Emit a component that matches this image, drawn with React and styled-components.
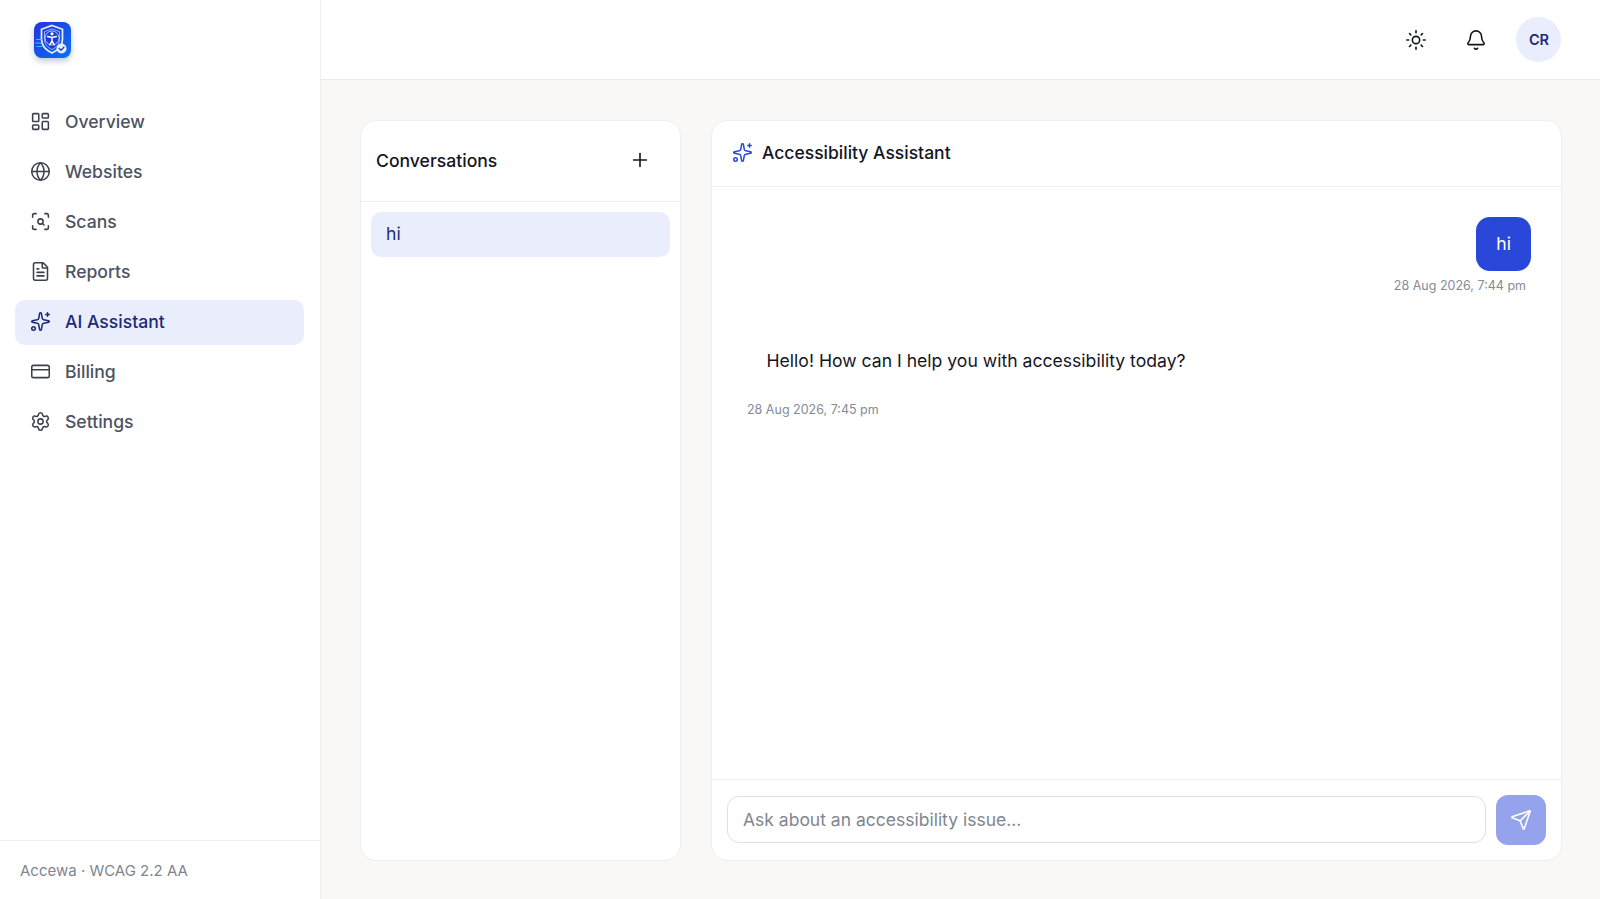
import React from 'react'
import styled, { createGlobalStyle } from 'styled-components'
import {
  LayoutDashboard,
  Globe,
  ScanSearch,
  FileText,
  Sparkles,
  CreditCard,
  Settings,
  Sun,
  Bell,
  Plus,
  Send,
} from 'lucide-react'

const GlobalStyle = createGlobalStyle`
  * { box-sizing: border-box; }
  html, body { margin: 0; height: 100%; }
  body {
    font-family: Inter, "Noto Sans", sans-serif;
    background: #f9f8f6;
    color: #14161f;
  }
  #root { height: 100%; }
`

const Shell = styled.div`
  display: grid;
  grid-template-columns: 321px 1fr;
  height: 899px;
  overflow: hidden;
`

const Sidebar = styled.aside`
  display: flex;
  flex-direction: column;
  background: #fff;
  border-right: 1px solid #efeeec;
`

const LogoRow = styled.div`
  height: 80px;
  padding: 20px 0 0 32px;
`

const Nav = styled.nav`
  flex: 1;
  display: flex;
  flex-direction: column;
  gap: 5px;
  padding: 20px 16px 0 15px;
`

const NavItem = styled.a`
  display: flex;
  align-items: center;
  gap: 14px;
  height: 45px;
  padding: 0 14px 2px 15px;
  border-radius: 10px;
  font-size: 17.6px;
  font-weight: 500;
  color: ${p => (p.$active ? '#1e2a78' : '#4d5362')};
  background: ${p => (p.$active ? '#eaeefc' : 'transparent')};
  svg { color: ${p => (p.$active ? '#1e2a78' : '#3b404d')}; flex: none; }
`

const SideFooter = styled.div`
  height: 59px;
  display: flex;
  align-items: center;
  padding-left: 20px;
  border-top: 1px solid #efeeec;
  font-size: 15px;
  color: #7f8591;
`

const Main = styled.main`
  display: flex;
  flex-direction: column;
  min-width: 0;
`

const Topbar = styled.header`
  height: 80px;
  flex: none;
  display: flex;
  align-items: center;
  justify-content: flex-end;
  gap: 20px;
  padding-right: 39px;
  background: #fff;
  border-bottom: 1px solid #ebeae8;
`

const IconButton = styled.button`
  width: 40px;
  height: 40px;
  display: flex;
  align-items: center;
  justify-content: center;
  padding: 0;
  border: 0;
  background: none;
  color: #14161f;
`

const Avatar = styled.div`
  width: 45px;
  height: 45px;
  border-radius: 50%;
  display: flex;
  align-items: center;
  justify-content: center;
  padding-left: 1px;
  background: #eaeefc;
  color: #1e2a78;
  font-size: 14.5px;
  font-weight: 600;
`

const Content = styled.div`
  flex: 1;
  min-height: 0;
  display: grid;
  grid-template-columns: 321px 1fr;
  gap: 30px;
  padding: 40px 38px 38px 39px;
`

const Panel = styled.section`
  display: flex;
  flex-direction: column;
  min-height: 0;
  background: #fff;
  border: 1px solid #efeeec;
  border-radius: 16px;
  overflow: hidden;
`

const ConvHeader = styled.div`
  height: 81px;
  flex: none;
  display: flex;
  align-items: center;
  justify-content: space-between;
  padding: 0 29px 2px 15px;
  border-bottom: 1px solid #efeeec;
`

const ConvTitle = styled.h2`
  margin: 0;
  font-size: 17.6px;
  font-weight: 500;
  color: #14161f;
`

const PlusButton = styled(IconButton)`
  width: 22px;
  height: 22px;
`

const ConvList = styled.div`
  padding: 10px;
`

const ConvItem = styled.div`
  height: 45px;
  display: flex;
  align-items: center;
  padding: 0 15px 2px;
  border-radius: 10px;
  background: #eaeefc;
  color: #1e2a78;
  font-size: 17.6px;
`

const ChatHeader = styled.div`
  height: 66px;
  flex: none;
  display: flex;
  align-items: center;
  gap: 9px;
  padding: 0 0 2px 20px;
  border-bottom: 1px solid #efeeec;
  color: #2947d8;
`

const ChatTitle = styled.h2`
  margin: 0;
  font-size: 17.5px;
  font-weight: 500;
  color: #14161f;
`

const Messages = styled.div`
  flex: 1;
  min-height: 0;
  display: flex;
  flex-direction: column;
  gap: 39px;
  padding: 30px 30px 0;
`

const Message = styled.div`
  display: flex;
  flex-direction: column;
  align-items: ${p => (p.$mine ? 'flex-end' : 'flex-start')};
`

const Bubble = styled.div`
  border-radius: 14px;
  font-size: 17.6px;
  line-height: 26px;
  padding: ${p => (p.$mine ? '14px 20px' : '14px 24.5px')};
  background: ${p => (p.$mine ? '#2947d8' : 'transparent')};
  color: ${p => (p.$mine ? '#fff' : '#14161f')};
`

const Stamp = styled.time`
  font-size: 12.5px;
  line-height: 18px;
  color: #858b96;
  margin-top: ${p => (p.$mine ? '6px' : '13px')};
  padding: ${p => (p.$mine ? '0 5px 0 0' : '0 0 0 5px')};
`

const Composer = styled.form`
  height: 81px;
  flex: none;
  display: flex;
  align-items: center;
  gap: 10px;
  padding: 0 15px;
  border-top: 1px solid #efeeec;
`

const Input = styled.input`
  flex: 1;
  height: 47px;
  margin-bottom: 2px;
  padding: 0 15px;
  border: 1px solid #dfdfdc;
  border-radius: 12px;
  background: #fff;
  font: 400 17.5px Inter, sans-serif;
  &::placeholder { color: #7f8591; opacity: 1; }
`

const SendButton = styled.button`
  width: 50px;
  height: 50px;
  flex: none;
  display: flex;
  align-items: center;
  justify-content: center;
  padding: 0;
  border: 0;
  border-radius: 12px;
  background: #94a3ec;
  color: #fff;
`

const navItems = [
  { label: 'Overview', icon: LayoutDashboard },
  { label: 'Websites', icon: Globe },
  { label: 'Scans', icon: ScanSearch },
  { label: 'Reports', icon: FileText },
  { label: 'AI Assistant', icon: Sparkles, active: true },
  { label: 'Billing', icon: CreditCard },
  { label: 'Settings', icon: Settings },
]

function Logo() {
  return (
    <svg width="40" height="42" viewBox="0 0 40 42" style={{ filter: 'drop-shadow(0 3px 3px rgba(30,50,120,.28))' }}>
      <defs>
        <linearGradient id="logoBg" x1="0" y1="0" x2="1" y2="1">
          <stop offset="0" stopColor="#2433e0" />
          <stop offset="1" stopColor="#0a72f0" />
        </linearGradient>
      </defs>
      <rect x="2" y="2" width="37" height="36" rx="8" fill="url(#logoBg)" />
      <path d="M20 5.500l10.500 3.800v10c0 7-4.700 11-10.500 13.700-5.800-2.700-10.500-6.700-10.500-13.700v-10z" fill="none" stroke="#e8eefc" strokeWidth="1.700" />
      <path d="M20 9l7.500 2.700v7.600c0 4.800-3.200 8-7.500 10.200-4.300-2.200-7.500-5.400-7.500-10.200v-7.600z" fill="#1b3bd8" stroke="#cfdcff" strokeWidth=".7" />
      <circle cx="20" cy="18" r="7" fill="none" stroke="#dbe5ff" strokeWidth=".8" />
      <circle cx="20" cy="13.800" r="1.600" fill="#fff" />
      <path d="M15.500 16.500l4.500 1 4.500-1M20 17.500v3.500M20 21l-2.200 3.800M20 21l2.200 3.800" stroke="#fff" strokeWidth="1.500" fill="none" strokeLinecap="round" />
      <path d="M4.500 19.500h4.500M3.500 23h5.500M5 26.500h5" stroke="#35c7ff" strokeWidth="1.200" strokeLinecap="round" />
      <circle cx="29.500" cy="28.500" r="5" fill="#e8eefc" />
      <path d="M27.300 28.500l1.700 1.700 2.900-3" stroke="#1b3bd8" strokeWidth="1.300" fill="none" strokeLinecap="round" strokeLinejoin="round" />
    </svg>
  )
}

export default function App() {
  return (
    <>
      <GlobalStyle />
      <Shell>
        <Sidebar>
          <LogoRow>
            <Logo />
          </LogoRow>
          <Nav>
            {navItems.map(item => (
              <NavItem key={item.label} $active={item.active}>
                <item.icon size={21} strokeWidth={1.75} />
                {item.label}
              </NavItem>
            ))}
          </Nav>
          <SideFooter>Accewa · WCAG 2.2 AA</SideFooter>
        </Sidebar>
        <Main>
          <Topbar>
            <IconButton><Sun size={22} strokeWidth={1.75} /></IconButton>
            <IconButton><Bell size={22} strokeWidth={1.75} /></IconButton>
            <Avatar>CR</Avatar>
          </Topbar>
          <Content>
            <Panel>
              <ConvHeader>
                <ConvTitle>Conversations</ConvTitle>
                <PlusButton><Plus size={22} strokeWidth={1.75} /></PlusButton>
              </ConvHeader>
              <ConvList>
                <ConvItem>hi</ConvItem>
              </ConvList>
            </Panel>
            <Panel>
              <ChatHeader>
                <Sparkles size={21} strokeWidth={1.75} />
                <ChatTitle>Accessibility Assistant</ChatTitle>
              </ChatHeader>
              <Messages>
                <Message $mine>
                  <Bubble $mine>hi</Bubble>
                  <Stamp $mine>28 Aug 2026, 7:44 pm</Stamp>
                </Message>
                <Message>
                  <Bubble>Hello! How can I help you with accessibility today?</Bubble>
                  <Stamp>28 Aug 2026, 7:45 pm</Stamp>
                </Message>
              </Messages>
              <Composer onSubmit={e => e.preventDefault()}>
                <Input placeholder="Ask about an accessibility issue..." />
                <SendButton type="submit"><Send size={22} strokeWidth={1.75} /></SendButton>
              </Composer>
            </Panel>
          </Content>
        </Main>
      </Shell>
    </>
  )
}
